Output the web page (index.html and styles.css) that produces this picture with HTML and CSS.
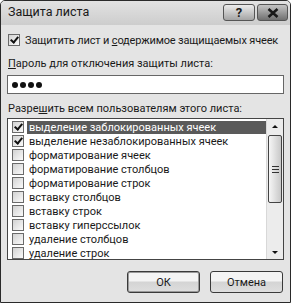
FILE: index.html
```html
<!DOCTYPE html>
<html lang="ru">
<head>
  <meta charset="UTF-8" />
  <title>Защита листа</title>
  <link rel="stylesheet" href="styles.css">
</head>
<body>
  <div class="window">
    <div class="titlebar">
      <span class="title">Защита листа</span>
      <div class="tbuttons">
        <span class="tbtn help">?</span>
        <span class="tbtn close">
          <svg width="14" height="10" viewBox="0 0 14 10"><path d="M2.5 1 L11.5 9 M11.5 1 L2.5 9" stroke="#1a1a1a" stroke-width="2.6"/></svg>
        </span>
      </div>
    </div>

    <div class="content">
      <div class="check-row">
        <span class="cb checked"></span>
        <span>Защитить лист и <u>с</u>одержимое защищаемых ячеек</span>
      </div>

      <div class="label"><u>П</u>ароль для отключения защиты листа:</div>
      <div class="input"><span class="dot"></span><span class="dot"></span><span class="dot"></span><span class="dot"></span></div>

      <div class="label second">Разре<u>ш</u>ить всем пользователям этого листа:</div>
      <div class="list">
        <div class="items">
          <div class="item"><span class="cb checked"></span><span class="txt sel">выделение заблокированных ячеек</span></div>
          <div class="item"><span class="cb checked"></span><span class="txt">выделение незаблокированных ячеек</span></div>
          <div class="item"><span class="cb"></span><span class="txt">форматирование ячеек</span></div>
          <div class="item"><span class="cb"></span><span class="txt">форматирование столбцов</span></div>
          <div class="item"><span class="cb"></span><span class="txt">форматирование строк</span></div>
          <div class="item"><span class="cb"></span><span class="txt">вставку столбцов</span></div>
          <div class="item"><span class="cb"></span><span class="txt">вставку строк</span></div>
          <div class="item"><span class="cb"></span><span class="txt">вставку гиперссылок</span></div>
          <div class="item"><span class="cb"></span><span class="txt">удаление столбцов</span></div>
          <div class="item"><span class="cb"></span><span class="txt">удаление строк</span></div>
        </div>
        <div class="scrollbar">
          <div class="arrow up"></div>
          <div class="track">
            <div class="thumb"><span class="grip"></span></div>
          </div>
          <div class="arrow down"></div>
        </div>
      </div>

      <div class="buttons">
        <span class="btn default">ОК</span>
        <span class="btn">Отмена</span>
      </div>
    </div>
  </div>
</body>
</html>
```

FILE: styles.css
```css
body {
  margin: 0;
  font-family: Roboto, 'Liberation Sans', sans-serif;
  font-size: 11px;
  color: #1a1a1a;
  background: #fff;
}
.window {
  width: 289px;
  height: 301px;
  border: 1px solid #2a2a2a;
  border-radius: 5px 5px 0 0;
  background: #e4e4e4;
}
.titlebar {
  height: 24px;
  display: flex;
  align-items: center;
  justify-content: space-between;
  padding: 0 2px 0 7px;
  background: linear-gradient(to bottom, #e2e2e2, #cdcdcd);
  border-radius: 4px 4px 0 0;
}
.title {
  font-size: 12.5px;
  margin-top: -3px;
}
.tbuttons {
  display: flex;
  gap: 2px;
  align-self: flex-start;
  margin-top: 3px;
}
.tbtn {
  display: flex;
  align-items: center;
  justify-content: center;
  height: 15px;
  border: 1px solid #555;
  border-radius: 3px;
  font-weight: bold;
  font-size: 13px;
}
.help {
  width: 30px;
  background: linear-gradient(to bottom, #ececec, #a4a4a4);
}
.close {
  width: 29px;
  background: linear-gradient(to bottom, #c4c4c4, #707070);
}
.content {
  padding: 0 6px;
}
.check-row {
  display: flex;
  align-items: center;
  gap: 5px;
  margin: 7px 0 0 1px;
  height: 16px;
  white-space: nowrap;
  letter-spacing: -0.15px;
}
.cb {
  width: 10px;
  height: 10px;
  border: 1px solid #6a6a6a;
  background: linear-gradient(135deg, #d2d2d2, #fafafa);
  position: relative;
  flex: none;
}
.cb.checked::after {
  content: "";
  position: absolute;
  left: 3px;
  top: 0;
  width: 3px;
  height: 6px;
  border: solid #111;
  border-width: 0 2px 2px 0;
  transform: rotate(40deg);
}
.label {
  margin: 9px 0 0 1px;
  line-height: 14px;
}
.label.second {
  margin-top: 8px;
}
.input {
  margin-top: 4px;
  height: 17px;
  border: 1px solid #666;
  background: #fff;
  padding-left: 4px;
  display: flex;
  align-items: center;
  gap: 2px;
}
.dot {
  width: 6px;
  height: 6px;
  border-radius: 50%;
  background: #111;
}
.list {
  margin-top: 2px;
  height: 140px;
  border: 1px solid #444;
  background: #fff;
  display: flex;
}
.items {
  flex: 1;
  padding-top: 1px;
}
.item {
  display: flex;
  align-items: center;
  height: 14px;
  padding-left: 4px;
}
.item .cb {
  margin-right: 3px;
}
.txt {
  flex: 1;
  padding-left: 2px;
  line-height: 13px;
  white-space: nowrap;
}
.txt.sel {
  background: #5a5a5a;
  color: #fff;
}
.scrollbar {
  width: 16px;
  display: flex;
  flex-direction: column;
  background: #ececec;
  border-left: 1px solid #d8d8d8;
}
.arrow {
  height: 14px;
  display: flex;
  align-items: center;
  justify-content: center;
}
.arrow.up::after {
  content: "";
  border: 3px solid transparent;
  border-bottom: 3px solid #111;
  border-top: 0;
}
.arrow.down::after {
  content: "";
  border: 3px solid transparent;
  border-top: 3px solid #111;
  border-bottom: 0;
}
.track {
  flex: 1;
  padding: 2px 1px 0 1px;
}
.thumb {
  height: 66px;
  border: 1px solid #444;
  border-radius: 2px;
  background: linear-gradient(to right, #f6f6f6, #c8c8c8);
  display: flex;
  align-items: center;
  justify-content: center;
}
.grip {
  width: 7px;
  height: 7px;
  background: repeating-linear-gradient(to bottom, #333 0 1px, transparent 1px 3px);
}
.buttons {
  display: flex;
  justify-content: flex-end;
  gap: 10px;
  margin-top: 11px;
  padding-right: 1px;
}
.btn {
  width: 71px;
  height: 20px;
  border: 1px solid #3a3a3a;
  border-radius: 3px;
  background: linear-gradient(to bottom, #f4f4f4 45%, #d4d4d4 50%, #dedede);
  display: flex;
  align-items: center;
  justify-content: center;
}
.btn.default {
  box-shadow: inset 0 0 0 1px #9a9a9a;
}
```
